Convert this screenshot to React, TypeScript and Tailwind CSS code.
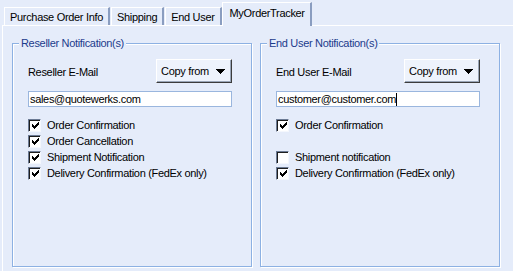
import { ReactNode } from 'react';

const tabs = [
    { label: 'Purchase Order Info', active: false },
    { label: 'Shipping', active: false },
    { label: 'End User', active: false },
    { label: 'MyOrderTracker', active: true },
];

// classic 7x7 tick, one rect per row
const tick = [
    [6, 0, 1],
    [5, 1, 2],
    [0, 2, 1],
    [4, 2, 3],
    [0, 3, 2],
    [3, 3, 3],
    [0, 4, 5],
    [1, 5, 3],
    [2, 6, 1],
];

function CheckBox({ checked }: { checked: boolean }) {
    return (
        <span className="w-[13px] h-[13px] shrink-0 bg-white border border-t-[#6b7a94] border-l-[#6b7a94] border-r-[#f4f7fd] border-b-[#f4f7fd] shadow-[inset_1px_1px_0_#1e1e1e] flex items-center justify-center pl-px pt-px">
            {checked && (
                <svg width="7" height="7" viewBox="0 0 7 7" shapeRendering="crispEdges">
                    {tick.map(([x, y, w], i) => (
                        <rect key={i} x={x} y={y} width={w} height={1} fill="#000" />
                    ))}
                </svg>
            )}
        </span>
    );
}

function Option({ label, checked }: { label: string; checked: boolean }) {
    return (
        <div className="h-[16px] flex items-center gap-[6px]">
            <CheckBox checked={checked} />
            <span>{label}</span>
        </div>
    );
}

function GroupBox({ title, children }: { title: string; children: ReactNode }) {
    return (
        <div className="relative w-[240px] h-[224px] border border-[#8db1e3] shadow-[inset_1px_1px_0_#fff,1px_1px_0_#fff] pl-[15px] pr-[19px] pt-[15px]">
            <span className="absolute left-[6px] top-[-8px] px-[2px] bg-[#e5ecfa] text-[#1c3b8c] leading-[14px]">
                {title}
            </span>
            {children}
        </div>
    );
}

function CopyButton() {
    return (
        <button className="w-[76px] h-[24px] bg-[#eef3fc] border border-t-white border-l-white border-r-[#3c3c3c] border-b-[#3c3c3c] shadow-[inset_-1px_-1px_0_#9aa6b8] flex items-center justify-center gap-[7px] pr-[2px]">
            <span>Copy from</span>
            <svg width="9" height="5" viewBox="0 0 9 5" shapeRendering="crispEdges">
                <path d="M0 0h9L4.5 5z" fill="#000" />
            </svg>
        </button>
    );
}

function EmailBlock({ label, value, caret }: { label: string; value: string; caret?: boolean }) {
    return (
        <div>
            <div className="flex items-end justify-between">
                <span className="mb-[3px]">{label}</span>
                <CopyButton />
            </div>
            <div className="mt-[8px] h-[16px] bg-white border border-[#9ab6de] flex items-center pl-[1px]">
                <span>{value}</span>
                {caret && <span className="w-px h-[13px] bg-black" />}
            </div>
        </div>
    );
}

export default function App() {
    return (
        <div className="w-[513px] h-[271px] bg-[#e5ecfa] overflow-hidden text-[11px] tracking-[-0.32px] text-black font-['Liberation_Sans',Arial,sans-serif]">
            <div className="h-[25px] flex items-end pl-[4px]">
                {tabs.map((t) =>
                    t.active ? (
                        <div
                            key={t.label}
                            className="relative z-10 -mb-px h-[24px] ml-[-1px] pl-[7px] pr-[5px] bg-[#e5ecfa] border-t border-l border-white border-r-2 border-r-[#8a9dc0] flex items-center pb-[2px]"
                        >
                            {t.label}
                        </div>
                    ) : (
                        <div
                            key={t.label}
                            className="h-[18px] mr-px px-[5px] bg-[#e5ecfa] border-t border-l border-white border-r-2 border-r-[#8a9dc0] flex items-center pt-px"
                        >
                            {t.label}
                        </div>
                    )
                )}
            </div>
            <div className="ml-[2px] h-[246px] border-t border-l border-white pl-[9px] pt-[17px] flex gap-[8px]">
                <GroupBox title="Reseller Notification(s)">
                    <EmailBlock label="Reseller E-Mail" value="sales@quotewerks.com" />
                    <div className="mt-[10px]">
                        <Option label="Order Confirmation" checked />
                        <Option label="Order Cancellation" checked />
                        <Option label="Shipment Notification" checked />
                        <Option label="Delivery Confirmation (FedEx only)" checked />
                    </div>
                </GroupBox>
                <GroupBox title="End User Notification(s)">
                    <EmailBlock label="End User E-Mail" value="customer@customer.com" caret />
                    <div className="mt-[10px]">
                        <Option label="Order Confirmation" checked />
                        <div className="h-[16px]" />
                        <Option label="Shipment notification" checked={false} />
                        <Option label="Delivery Confirmation (FedEx only)" checked />
                    </div>
                </GroupBox>
            </div>
        </div>
    );
}
